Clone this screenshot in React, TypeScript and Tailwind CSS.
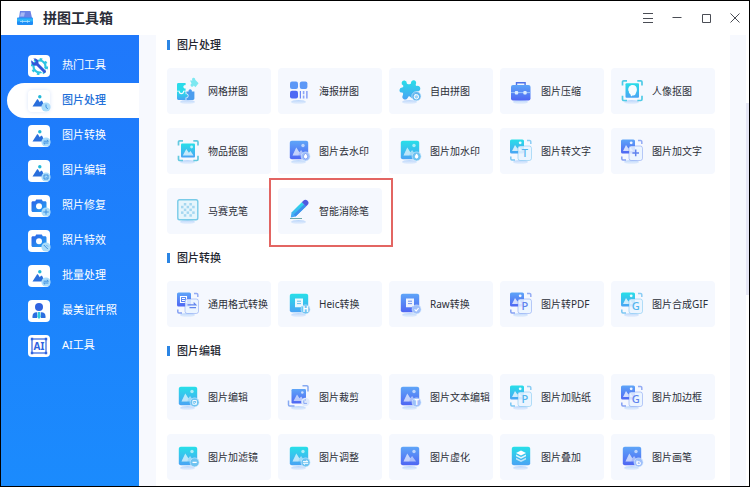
import type { ReactNode } from "react";
import clsx from "clsx";

type Tone = "cyan" | "blue";

const FILL: Record<Tone, string> = { cyan: "url(#cyan)", blue: "url(#blue)" };
const INK: Record<Tone, string> = { cyan: "#52b5ee", blue: "#5f83ee" };

function Gradients() {
  return (
    <svg width="0" height="0" className="absolute" aria-hidden="true">
      <defs>
        <linearGradient id="cyan" x1="0" y1="0" x2="0" y2="1">
          <stop offset="0" stopColor="#27dfe8" />
          <stop offset="1" stopColor="#4aa3f4" />
        </linearGradient>
        <linearGradient id="blue" x1="0" y1="0" x2="0" y2="1">
          <stop offset="0" stopColor="#5ea5f8" />
          <stop offset="1" stopColor="#4f66f3" />
        </linearGradient>
        <linearGradient id="side" x1="0" y1="0" x2="1" y2="1">
          <stop offset="0" stopColor="#2b5fe6" />
          <stop offset="1" stopColor="#27a5f5" />
        </linearGradient>
        <linearGradient id="shade" x1="0" y1="0" x2="0" y2="1">
          <stop offset="0" stopColor="#a9ccfa" />
          <stop offset="1" stopColor="#e6effd" />
        </linearGradient>
      </defs>
    </svg>
  );
}

/* ---------- parts shared by the tool icons ---------- */

function ToolSvg({ children }: { children: ReactNode }) {
  return (
    <svg viewBox="0 0 24 28" className="h-7 w-6 shrink-0" fill="none" aria-hidden="true">
      <ellipse cx="11.5" cy="25" rx="7.5" ry="2" fill="url(#shade)" opacity="0.8" />
      {children}
    </svg>
  );
}

function Mountains() {
  return (
    <>
      <path d="M5.5 18.5l3.8-8 3 4.8 1.8-2.2 4 5.400z" fill="#fff" opacity="0.5" />
      <path d="M5.500 18.500l3.800-8 3 4.800-1 3.200z" fill="#fff" opacity="0.3" />
      <circle cx="16" cy="8.500" r="1.700" fill="#fff" opacity="0.6" />
    </>
  );
}

function Badge({ tone, glyph }: { tone: Tone; glyph: string }) {
  const ink = INK[tone];
  return (
    <>
      <circle cx="18.600" cy="19.400" r="4.500" fill={tone === "cyan" ? "#6fc3f1" : "#9fbffa"} stroke="#d8ecfe" strokeWidth="0.6" />
      {glyph === "drop" && <path d="M18.600 16.200c1.500 1.700 2.100 2.500 2.100 3.600a2.100 2.100 0 0 1-4.200 0c0-1.100.6-1.900 2.100-3.600z" fill="#fff" stroke={ink} strokeWidth="0.6" />}
      {glyph === "minus" && <path d="M16.500 19.400h4.200" stroke="#fff" strokeWidth="1.3" />}
      {glyph === "edit" && <path d="M16.800 17.500h3.600v3.800h-3.600zM18.300 19.400l1.600 1.400" stroke="#fff" strokeWidth="0.9" />}
      {glyph === "swap" && <path d="M16 18.600h4.800l-1.400-1.300M21.200 20.300h-4.800l1.400 1.300" stroke="#fff" strokeWidth="1" />}
      {glyph === "check" && <path d="M16.600 19.400l1.600 1.500 2.400-2.800" stroke="#fff" strokeWidth="1.1" />}
      {glyph === "hand" && <path d="M17 20.600v-3M17 19c2.600-1 4 .2 3.200 2.400H17z" stroke="#fff" strokeWidth="1" />}
      {glyph.length === 1 && (
        <text x="18.600" y="22.200" textAnchor="middle" fontSize="8" fontWeight="700" fill="#fff" fontFamily="Noto Sans">
          {glyph}
        </text>
      )}
    </>
  );
}

function Frame({ color }: { color: string }) {
  return (
    <path
      d="M2.500 8.500V5a1.200 1.200 0 0 1 1.200-1.200H7M17.300 3.800h3.500A1.200 1.200 0 0 1 22 5v3.500M22 18.800v3.500a1.200 1.200 0 0 1-1.200 1.200h-3.500M7 23.500H3.700a1.200 1.200 0 0 1-1.200-1.200v-3.500"
      stroke={color}
      strokeWidth="1.7"
    />
  );
}

function Picture({ tone, glyph }: { tone: Tone; glyph?: string }) {
  return (
    <ToolSvg>
      <rect x="2.800" y="3.800" width="18.400" height="18.400" rx="2" fill={FILL[tone]} />
      <Mountains />
      {glyph && <Badge tone={tone} glyph={glyph} />}
    </ToolSvg>
  );
}

function Doc({ tone, glyph }: { tone: Tone; glyph: string }) {
  return (
    <ToolSvg>
      <rect x="2.800" y="3.800" width="18.400" height="18.400" rx="2" fill={FILL[tone]} />
      <path d="M8 8.500h8v6.800l-2 2H8z" fill="#fff" opacity="0.9" />
      <path d="M10 11.200h4M10 13.600h4" stroke={INK[tone]} strokeWidth="0.9" />
      <Badge tone={tone} glyph={glyph} />
    </ToolSvg>
  );
}

/* a small picture turning into a sheet with a letter on it */
function Pair({ tone, glyph, doc }: { tone: Tone; glyph: string; doc?: boolean }) {
  const ink = INK[tone];
  return (
    <ToolSvg>
      <rect x="1" y="2.500" width="14" height="14" rx="1.600" fill={FILL[tone]} />
      {doc ? (
        <path d="M4.500 6.500h6v6h-6zM6 8.500h3M6 10.500h3" stroke="#fff" strokeWidth="1.1" />
      ) : (
        <>
          <path d="M3 14l3-6 2.400 3.400 1.600-1.800 3 4.400z" fill="#fff" opacity="0.75" />
          <circle cx="11.200" cy="5.800" r="1.400" fill="#fff" opacity="0.9" />
        </>
      )}
      <path d="M18 3.500h2.600a1.200 1.200 0 0 1 1.200 1.200V7" stroke={ink} strokeWidth="1.5" opacity="0.65" />
      <path d="M1.800 19.500v2.300A1.200 1.200 0 0 0 3 23h3" stroke={ink} strokeWidth="1.5" opacity="0.75" />
      <rect x="9" y="9" width="13.500" height="14.500" rx="2.200" fill="#eaf5ff" fillOpacity="0.85" stroke={ink} strokeOpacity="0.45" strokeWidth="0.9" />
      {glyph === "arrow" && <path d="M11.500 14.800h8.300l-2.200-2.200M20 17.600h-6.500" stroke={ink} strokeWidth="1.2" />}
      {glyph === "plus" && <path d="M15.700 12.600v6.600M12.400 15.900H19" stroke={ink} strokeWidth="1.5" />}
      {glyph.length === 1 && (
        <text x="15.800" y="20" textAnchor="middle" fontSize="11" fontWeight="500" fill={ink} fontFamily="Noto Sans">
          {glyph}
        </text>
      )}
    </ToolSvg>
  );
}

const gridPuzzle = (
  <ToolSvg>
    <path d="M2.400 6h7.200v2.200a1.700 1.700 0 1 0 0 3.200v2.400H7a1.700 1.700 0 1 1-3.200 0H1V7.400A1.400 1.400 0 0 1 2.400 6z" fill="#2bdbea" />
    <path d="M1 14.600h1.800a2.400 2.400 0 0 0 5.200 0h1.600v2.600a1.700 1.700 0 1 1 0 3.200V23H2.400A1.400 1.400 0 0 1 1 21.600z" fill="url(#cyan)" />
    <path d="M10.400 14.600h2.200a1.700 1.700 0 1 1 3.200 0h2.600v7A1.400 1.400 0 0 1 17 23h-6.600v-2a2.200 2.200 0 0 0 0-4.400z" fill="#4b9dee" />
    <path d="M14 3.600l2.400-.2a1.600 1.600 0 1 1 2.800-.6l3.400 3.400-3.200 4-1.600-1.600a1.700 1.700 0 1 1-2.200-2.200z" fill="#7ce8f1" />
  </ToolSvg>
);

const poster = (
  <ToolSvg>
    <rect x="3" y="4.500" width="8" height="7.600" rx="2" fill="#5c98f7" />
    <rect x="12.800" y="4.500" width="7.600" height="7.600" rx="2" fill="#5c98f7" />
    <rect x="3" y="13.800" width="8" height="7.800" rx="2" fill="#4f6af4" />
    <path d="M13.400 14v7.600M19.900 14v7.600" stroke="#6d88f4" strokeWidth="1.200" />
    <path d="M16.600 14v3.200M16.600 18.600v3" stroke="#8ba5f7" strokeWidth="1.600" />
  </ToolSvg>
);

const freePuzzle = (
  <ToolSvg>
    <path
      d="M5.200 8.400a2.600 2.600 0 1 1 3.600-2.200c.2 1.200 3.600 1.400 4.200 0a2.600 2.600 0 1 1 4.800 1c-.2 1 .2 1.600 1 1.800a2.700 2.700 0 1 1 .2 5.200c-1 .2-1.400 1-1 2.200 1 2.600-.6 5-2.800 5.200-2 .2-2.400-2.400-4-2.400-1.400 0-1.200 2.800-3.400 3.200-2.200.4-4.400-1.400-3-4.200.6-1.200.4-2.400-.8-2.600a2.600 2.600 0 1 1 .2-5.200c.8 0 1.300-1 1-2z"
      fill="url(#cyan)"
    />
    <circle cx="18.400" cy="19.200" r="4.600" fill="#5fb3ee" stroke="#d5ecfd" strokeWidth="0.6" />
    <circle cx="18.400" cy="19.800" r="2.200" fill="#9bd3f6" stroke="#fff" strokeWidth="1" />
    <path d="M16.800 16.800l1 1.600" stroke="#fff" strokeWidth="0.9" />
  </ToolSvg>
);

const briefcase = (
  <ToolSvg>
    <path d="M7.500 8V5.800h8.600V8" stroke="#4f72e8" strokeWidth="1.4" />
    <rect x="2" y="8" width="19.500" height="15.500" rx="2" fill="url(#blue)" />
    <path d="M2 15.600h19.500" stroke="#9cc6fb" strokeWidth="1" />
    <rect x="5.800" y="14" width="3.400" height="3.400" rx="1" fill="#d9ebff" />
    <rect x="14.300" y="14" width="3.400" height="3.400" rx="1" fill="#d9ebff" />
  </ToolSvg>
);

const portrait = (
  <ToolSvg>
    <Frame color="#4fcbe6" />
    <rect x="5.500" y="6.200" width="13.500" height="14.500" rx="1" fill="url(#cyan)" />
    <path d="M12.600 8c2.800 0 4.400 1.900 4.300 4.400 0 2.200-1 3.200-1.200 4.200-.2 1.400-1.200 2-2.600 1.900-1 0-1.300.3-1.500 1-.8-.5-1-1.400-1.200-2.300-1.400-.6-1.600-1.500-1.500-2.600L8.300 13.600C7.900 10.400 9.800 8 12.600 8z" fill="#f5fcff" />
  </ToolSvg>
);

const objectCut = (
  <ToolSvg>
    <Frame color="#63c9e0" />
    <rect x="5" y="6.500" width="14" height="14" rx="1" fill="url(#cyan)" />
    <path d="M6.800 18.500l3.500-6.500 2.600 3.800 1.600-1.800 3 4.500z" fill="#fff" opacity="0.7" />
    <circle cx="15.600" cy="10" r="1.400" fill="#fff" opacity="0.7" />
  </ToolSvg>
);

const crop = (
  <ToolSvg>
    <path d="M15.500 2.800h4.300A1.200 1.200 0 0 1 21 4v4.500M1.500 17.500v4.300A1.200 1.200 0 0 0 2.700 23h4.800" stroke="#86a9f2" strokeWidth="1.5" />
    <rect x="4.500" y="6" width="14.500" height="14.500" rx="1.200" fill="url(#blue)" />
    <path d="M6.500 18l3.500-6.500 2.600 3.800 1.600-1.800 3 4.500z" fill="#fff" opacity="0.6" />
    <circle cx="15.300" cy="9.500" r="1.300" fill="#fff" opacity="0.7" />
    <circle cx="18.400" cy="19" r="4.200" fill="#dfeafd" />
    <path d="M16.800 17.400v3H20M18.200 16.200v1.400" stroke="#7fa0f2" strokeWidth="0.9" />
  </ToolSvg>
);

const mosaic = (
  <ToolSvg>
    <rect x="1.800" y="2.800" width="20" height="20" rx="1.800" fill="#e6f5fc" stroke="#79cbe8" strokeWidth="1.4" />
    {[0, 1, 2, 3, 4].map((row) =>
      [0, 1, 2, 3, 4]
        .filter((col) => (row + col) % 2 === 1)
        .map((col) => (
          <rect key={`${row}-${col}`} x={5 + col * 2.8} y={6 + row * 2.8} width="2.500" height="2.500" fill="#a5d7f0" />
        ))
    )}
  </ToolSvg>
);

const pencil = (
  <ToolSvg>
    <path d="M4.500 15.600L14.800 5.200l4.200 4.200L8.600 19.600l-4.800.8z" fill="url(#cyan)" />
    <path d="M6.800 17.600L17 7.400l2 2L8.600 19.600z" fill="#3e8fee" />
    <path d="M14.800 5.200l1.500-1.500a2.600 2.600 0 0 1 4.200 4.200L19 9.400z" fill="#4c5be0" />
    <path d="M3 21.500h12" stroke="#5f9f9f" strokeWidth="0.9" />
  </ToolSvg>
);

const layers = (
  <ToolSvg>
    <rect x="2.800" y="3.800" width="18.400" height="18.400" rx="2" fill="url(#cyan)" />
    <path d="M12 7.500l5 2.500-5 2.500L7 10z" fill="#fff" />
    <path d="M7 11.400l5 2.500 5-2.500v1.900l-5 2.500-5-2.500z" fill="#fff" opacity="0.85" />
    <path d="M7 14.700l5 2.500 5-2.500v1.700L12 19l-5-2.600z" fill="#fff" opacity="0.65" />
  </ToolSvg>
);

const sections: { title: string; tools: { label: string; icon: ReactNode; marked?: boolean }[] }[] = [
  {
    title: "图片处理",
    tools: [
      { label: "网格拼图", icon: gridPuzzle },
      { label: "海报拼图", icon: poster },
      { label: "自由拼图", icon: freePuzzle },
      { label: "图片压缩", icon: briefcase },
      { label: "人像抠图", icon: portrait },
      { label: "物品抠图", icon: objectCut },
      { label: "图片去水印", icon: <Picture tone="blue" glyph="drop" /> },
      { label: "图片加水印", icon: <Picture tone="cyan" glyph="drop" /> },
      { label: "图片转文字", icon: <Pair tone="cyan" glyph="T" /> },
      { label: "图片加文字", icon: <Pair tone="blue" glyph="plus" /> },
      { label: "马赛克笔", icon: mosaic },
      { label: "智能消除笔", icon: pencil, marked: true },
    ],
  },
  {
    title: "图片转换",
    tools: [
      { label: "通用格式转换", icon: <Pair tone="blue" glyph="arrow" doc /> },
      { label: "Heic转换", icon: <Doc tone="cyan" glyph="H" /> },
      { label: "Raw转换", icon: <Doc tone="blue" glyph="check" /> },
      { label: "图片转PDF", icon: <Pair tone="blue" glyph="P" /> },
      { label: "图片合成GIF", icon: <Pair tone="cyan" glyph="G" /> },
    ],
  },
  {
    title: "图片编辑",
    tools: [
      { label: "图片编辑", icon: <Picture tone="cyan" glyph="edit" /> },
      { label: "图片裁剪", icon: crop },
      { label: "图片文本编辑", icon: <Picture tone="blue" glyph="T" /> },
      { label: "图片加贴纸", icon: <Pair tone="cyan" glyph="P" /> },
      { label: "图片加边框", icon: <Pair tone="blue" glyph="G" /> },
      { label: "图片加滤镜", icon: <Picture tone="cyan" glyph="minus" /> },
      { label: "图片调整", icon: <Picture tone="cyan" glyph="swap" /> },
      { label: "图片虚化", icon: <Picture tone="blue" /> },
      { label: "图片叠加", icon: layers },
      { label: "图片画笔", icon: <Picture tone="blue" glyph="hand" /> },
    ],
  },
];

/* ---------- sidebar icons ---------- */

function SideBadge({ d }: { d: string }) {
  return (
    <>
      <circle cx="18" cy="17" r="4.600" fill="#a9dcfa" />
      <path d={d} stroke="#3c8fe0" strokeWidth="1" />
    </>
  );
}

function SidePicture({ d }: { d: string }) {
  return (
    <>
      <path d="M4.500 16.500l4.300-6.800c.4-.6 1-.6 1.400 0l1.600 2.500 1-1.200c.4-.5 1-.5 1.400 0l2.600 5.500z" fill="#2a6fdc" />
      <circle cx="11.800" cy="6.800" r="1.700" fill="#22b8d8" />
      <SideBadge d={d} />
    </>
  );
}

function SideCamera({ d }: { d: string }) {
  return (
    <>
      <path d="M5 6.200h2.200l1-1.700h5.600l1 1.700H17c1 0 1.500.6 1.500 1.500v7.800c0 1-.6 1.500-1.500 1.500H5c-1 0-1.500-.6-1.500-1.500V7.700c0-1 .6-1.500 1.500-1.500z" fill="url(#side)" />
      <circle cx="11" cy="11.300" r="3" fill="#fff" />
      <SideBadge d={d} />
    </>
  );
}

const SWAP = "M15.600 16.200h4.800l-1.500-1.400M20.400 18h-4.800l1.500 1.400";

const menu: { label: string; icon: ReactNode }[] = [
  {
    label: "热门工具",
    icon: (
      <>
        <circle cx="11.500" cy="11.500" r="6" stroke="#2cc5e2" strokeWidth="2.200" />
        <circle cx="11.500" cy="11.500" r="7.600" stroke="#2cc5e2" strokeWidth="2" strokeDasharray="2.600 3.370" />
        <path d="M8 8l8 8.200" stroke="#fff" strokeWidth="5" />
        <path d="M8.500 8.500l8 8" stroke="#3158d8" strokeWidth="3" strokeLinecap="round" />
        <path d="M3.400 5.200l3 2.800L8 6.400 5.300 3.600c3.200-1 6 1.800 5 5-1 3-5.400 2.800-6.600.2-.6-1.200-.7-2.400-.3-3.600z" fill="#3158d8" />
      </>
    ),
  },
  { label: "图片处理", icon: <SidePicture d="M18 14.500v2.800l1.800 1.400" /> },
  { label: "图片转换", icon: <SidePicture d={SWAP} /> },
  { label: "图片编辑", icon: <SidePicture d="M16 15h4v4h-4zM17.500 16.800l1 1" /> },
  { label: "照片修复", icon: <SideCamera d="M18 14.300v5.400M15.300 17h5.400" /> },
  { label: "照片特效", icon: <SideCamera d="M15.800 15l4 4M18.800 15.400l1 1" /> },
  { label: "批量处理", icon: <SidePicture d={SWAP} /> },
  {
    label: "最美证件照",
    icon: (
      <>
        <circle cx="11" cy="7" r="4" fill="#2f63e0" />
        <path d="M4.500 18v-1.800c0-2.400 1.600-4 4-4h.8L9 18z" fill="#2d6fe0" />
        <path d="M17.500 18v-1.800c0-2.400-1.600-4-4-4h-.8L13 18z" fill="#2d6fe0" />
        <path d="M10 12h2l.8 5L11 19l-1.800-2z" fill="#2fc8dc" />
      </>
    ),
  },
  {
    label: "AI工具",
    icon: (
      <>
        <rect x="4" y="4" width="14" height="14" fill="#fff" stroke="#2f63e0" strokeWidth="1.200" />
        <path d="M2.800 2.800h2.400v2.400H2.800zM16.800 2.800h2.400v2.400h-2.400zM2.800 16.800h2.400v2.400H2.800zM16.800 16.800h2.400v2.400h-2.400z" fill="#2f63e0" />
        <text x="11" y="14.800" textAnchor="middle" fontSize="10" fontWeight="700" fill="#2f63e0" fontFamily="Noto Sans">
          AI
        </text>
      </>
    ),
  },
];

const windowButtons = [
  { label: "菜单", d: "M1 1.500h10M1 6.500h10M1 10.500h10" },
  { label: "最小化", d: "M1.500 5.500h9" },
  { label: "最大化", d: "M2.500 2.500h8v8h-8z" },
  { label: "关闭", d: "M1.500 1.500l9 9M10.500 1.500l-9 9" },
];

export default function App() {
  return (
    <div className="flex h-screen flex-col overflow-hidden border border-black bg-white font-['Noto_Sans','Noto_Sans_CJK_SC',sans-serif] text-[#2c2f38]">
      <Gradients />
      <header className="flex h-[34px] shrink-0 items-center pl-4">
        <svg viewBox="0 0 16 14" className="h-3.5 w-4" fill="none" aria-hidden="true">
          <path d="M3 0h10.500l1.500 7H2z" fill="#6b83e6" />
          <path d="M4 1.500h4l-1 4H3z" fill="#a8b8f4" />
          <rect y="6.500" width="16" height="7.500" rx="1" fill="#1f8df5" />
          <path d="M0 7.500h16v3H0z" fill="#2fb5fa" />
          <path d="M3 10.500h10M5.500 9.300v2.400M10.500 9.300v2.400" stroke="#a5ddff" strokeWidth="0.9" />
        </svg>
        <h1 className="ml-2.5 text-sm font-bold text-[#2a2d38]">拼图工具箱</h1>
        <div className="ml-auto flex">
          {windowButtons.map(({ label, d }) => (
            <button key={label} type="button" aria-label={label} className="flex h-8 w-[29px] items-center justify-center">
              <svg viewBox="0 0 12 12" className="size-3" fill="none" stroke="#4a4d55" aria-hidden="true">
                <path d={d} />
              </svg>
            </button>
          ))}
        </div>
      </header>

      <div className="flex min-h-0 flex-1">
        <nav className="w-[138px] shrink-0 bg-linear-to-b from-[#1f78fb] to-[#1b8bfd] pt-[13px] pl-1.5">
          {menu.map(({ label, icon }, i) => (
            <button
              key={label}
              type="button"
              aria-current={i === 1 ? "page" : undefined}
              className={clsx(
                "flex h-[35px] w-full items-center gap-3 rounded-l-full pl-[21px] text-[11px]",
                i === 1 ? "bg-white font-medium text-[#2470d8]" : "text-white"
              )}
            >
              <span className={clsx("size-[22px] shrink-0 rounded bg-white", i === 1 && "shadow-[0_0_4px_#dbe6fb]")}>
                <svg viewBox="0 0 22 22" className="size-full overflow-visible" fill="none" aria-hidden="true">
                  {icon}
                </svg>
              </span>
              {label}
            </button>
          ))}
        </nav>

        <div className="flex min-w-0 flex-1 bg-[#f7f9fe] pl-[17px]">
          <main className="flex flex-1 flex-col gap-3.5 overflow-hidden bg-white pr-[15px] pl-[11px]">
            {sections.map(({ title, tools }) => (
              <section key={title}>
                <h2 className="mb-[13px] flex h-5 items-center gap-[7px] text-[11px] font-medium text-[#23262f]">
                  <span className="h-2.5 w-[3px] bg-[#2b85e4]" />
                  {title}
                </h2>
                <div className="grid grid-cols-5 gap-x-[7px] gap-y-3.5">
                  {tools.map(({ label, icon, marked }) => (
                    <button
                      key={label}
                      type="button"
                      className="relative flex h-[46px] items-center gap-2 rounded-sm bg-[#f5f8fe] pl-[9px] text-[10px] whitespace-nowrap"
                    >
                      {icon}
                      {label}
                      {marked && <span className="absolute -top-2.5 -right-[11px] -bottom-[13px] -left-[9px] border-2 border-[#dc3f3b]/80" />}
                    </button>
                  ))}
                </div>
              </section>
            ))}
          </main>
          <div className="ml-4 w-[3px] bg-white pt-[68px]">
            <div className="h-1/2 bg-[#e6e7f5]" />
          </div>
        </div>
      </div>
    </div>
  );
}
